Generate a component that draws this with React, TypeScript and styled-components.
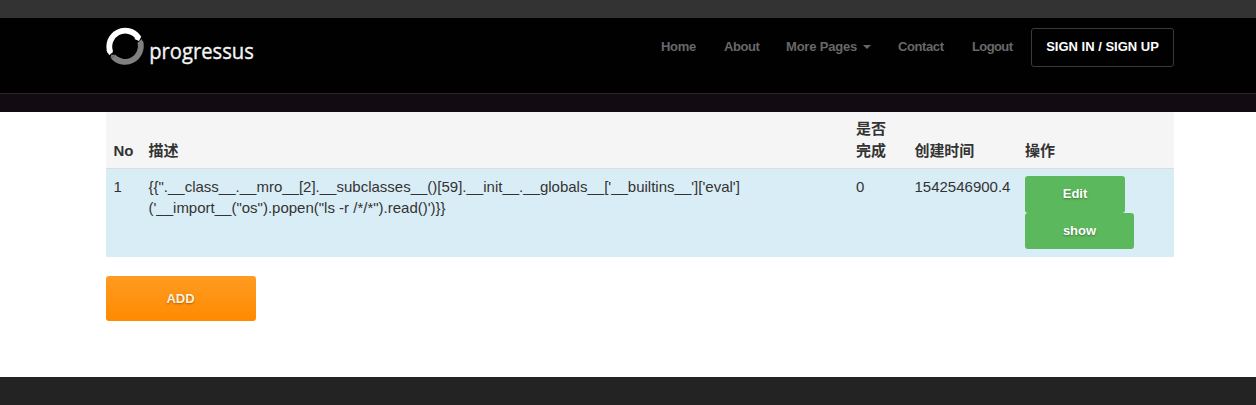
import React from "react";
import styled, { createGlobalStyle } from "styled-components";

const GlobalStyle = createGlobalStyle`
  * { box-sizing: border-box; }
  html, body { margin: 0; padding: 0; overflow: hidden; }
  body {
    background: #fff;
    color: #333;
    font: 15px/21.43px "Liberation Sans", Arial, "Noto Sans CJK SC", sans-serif;
  }
`;

const Page = styled.div`
  height: 405px;
  display: flex;
  flex-direction: column;
`;

const TopStrip = styled.div`
  flex: 0 0 18px;
  background: #333;
`;

const Header = styled.header`
  flex: 0 0 76px;
  background: #010102;
  border-bottom: 1px solid #28262a;
`;

const HeaderBand = styled.div`
  flex: 0 0 18px;
  background: #130b12;
`;

const Container = styled.div`
  width: 1068px;
  margin-left: 106px;
`;

const HeaderRow = styled(Container)`
  display: flex;
  justify-content: space-between;
  align-items: flex-start;
`;

const Brand = styled.a`
  display: flex;
  padding-top: 9px;
`;

const Nav = styled.nav`
  display: flex;
  padding-top: 10px;
`;

const NavLink = styled.a<{ $width: number; $spacing?: number }>`
  display: flex;
  align-items: center;
  width: ${(p) => p.$width}px;
  height: 37px;
  color: #68686a;
  font-size: 13px;
  font-weight: 700;
  letter-spacing: ${(p) => p.$spacing ?? -0.3}px;
  white-space: nowrap;
`;

const Caret = styled.span`
  margin: 1px 0 0 6px;
  border: 4px solid transparent;
  border-top-color: currentColor;
  border-bottom: 0;
`;

const SignIn = styled.a`
  width: 143px;
  height: 39px;
  border: 1px solid #3a3a3a;
  border-radius: 3px;
  color: #fff;
  font-size: 13px;
  font-weight: 700;
  line-height: 35px;
  text-align: center;
  white-space: nowrap;
`;

const Main = styled.main`
  flex: 0 0 265px;
`;

const Table = styled.table`
  width: 1068px;
  table-layout: fixed;
  border-collapse: separate;
  border-spacing: 0;
`;

const Th = styled.th`
  height: 57px;
  padding: 6px 8px 7px 7.5px;
  background: #f5f5f5;
  border-bottom: 1px solid #ddd;
  letter-spacing: -0.1px;
  text-align: left;
  vertical-align: bottom;

  &:last-child {
    padding-left: 8px;
  }
`;

const Td = styled.td`
  height: 88px;
  padding: 7px 8px 7px 7.5px;
  background: #d9edf7;
  vertical-align: top;
  white-space: nowrap;

  &:last-child {
    padding-left: 8px;
  }
`;

const Actions = styled.div`
  display: flex;
  flex-direction: column;
  align-items: flex-start;
`;

const ActionButton = styled.a<{ $width: number; $height: number }>`
  width: ${(p) => p.$width}px;
  height: ${(p) => p.$height}px;
  border-radius: 3px;
  background: #5cb85c;
  color: #fff;
  font-size: 13px;
  font-weight: 700;
  line-height: 36px;
  text-align: center;
  text-shadow: 0 1px 2px rgba(0, 0, 0, 0.35);
`;

const AddButton = styled.a`
  display: block;
  width: 150px;
  height: 45px;
  margin-top: 19px;
  padding-right: 1px;
  border-radius: 3px;
  background: linear-gradient(#ff9b22, #ff8a00);
  color: #fff0dc;
  font-size: 13px;
  font-weight: 700;
  line-height: 45px;
  text-align: center;
  text-shadow: 0 1px 2px rgba(0, 0, 0, 0.35);
`;

const Footer = styled.footer`
  flex: 1;
  background: #232323;
`;

const Logo = () => (
  <svg width="150" height="40" viewBox="0 0 150 40">
    <path d="M4.3 25.1A15.9 15.9 0 0 1 32.2 10.4" fill="none" stroke="#fff" strokeWidth="5.8" />
    <path d="M0.4 23L3.2 28.2L7.1 25L5.5 23Z M28.5 12L33 14L35.3 9.5L31 7.5Z" fill="#fff" />
    <path d="M34.4 15A15.9 15.9 0 0 1 7.2 29.6" fill="none" stroke="#808080" strokeWidth="5.8" />
    <path d="M31.3 16.2L35.8 12L37.3 16.5Z M4.5 31.5L5.2 27.8L9.5 27.7Z" fill="#808080" />
    <text
      x="43.2"
      y="32"
      fill="#f5f5f5"
      stroke="#f5f5f5"
      strokeWidth="0.35"
      fontFamily='"Open Sans", sans-serif'
      fontSize="22"
      textLength="104.6"
      lengthAdjust="spacingAndGlyphs"
    >
      progressus
    </text>
  </svg>
);

const columns = [
  { label: "No", width: 35 },
  { label: "描述", width: 707.5 },
  { label: "是否完成", width: 58.5 },
  { label: "创建时间", width: 110 },
  { label: "操作", width: 157 },
];

export default function App() {
  return (
    <Page>
      <GlobalStyle />
      <TopStrip />
      <Header>
        <HeaderRow>
          <Brand>
            <Logo />
          </Brand>
          <Nav>
            <NavLink $width={63}>Home</NavLink>
            <NavLink $width={62} $spacing={-0.4}>About</NavLink>
            <NavLink $width={112} $spacing={-0.2}>
              More Pages
              <Caret />
            </NavLink>
            <NavLink $width={74} $spacing={-0.4}>Contact</NavLink>
            <NavLink $width={59} $spacing={-0.6}>Logout</NavLink>
            <SignIn>SIGN IN / SIGN UP</SignIn>
          </Nav>
        </HeaderRow>
      </Header>
      <HeaderBand />
      <Main>
        <Container>
          <Table>
            <colgroup>
              {columns.map((c) => (
                <col key={c.label} width={c.width} />
              ))}
            </colgroup>
            <thead>
              <tr>
                {columns.map((c) => (
                  <Th key={c.label}>{c.label}</Th>
                ))}
              </tr>
            </thead>
            <tbody>
              <tr>
                <Td>1</Td>
                <Td>
                  {`{{".__class__.__mro__[2].__subclasses__()[59].__init__.__globals__['__builtins__']['eval']`}
                  <br />
                  {`('__import__("os").popen("ls -r /*/*").read()')}}`}
                </Td>
                <Td>0</Td>
                <Td>1542546900.4</Td>
                <Td>
                  <Actions>
                    <ActionButton $width={100} $height={37}>Edit</ActionButton>
                    <ActionButton $width={109} $height={36}>show</ActionButton>
                  </Actions>
                </Td>
              </tr>
            </tbody>
          </Table>
          <AddButton>ADD</AddButton>
        </Container>
      </Main>
      <Footer />
    </Page>
  );
}
